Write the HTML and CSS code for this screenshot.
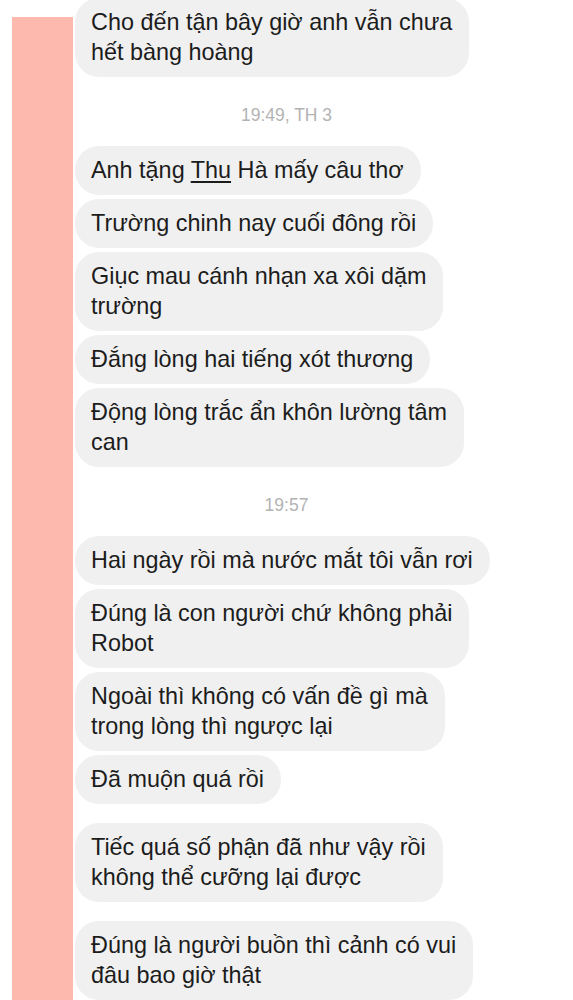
FILE: index.html
```html
<!DOCTYPE html>
<html lang="vi">
<head>
    <meta charset="UTF-8">
    <meta name="viewport" content="width=device-width, initial-scale=1.0">
    <title>Tin nhắn</title>
    <link rel="stylesheet" href="styles.css">
</head>
<body>
    <div class="screen">
        <div class="side-bar"></div>

        <div class="chat">
            <div class="bubble">Cho đến tận bây giờ anh vẫn chưa<br>hết bàng hoàng</div>

            <div class="time">19:49, TH 3</div>

            <div class="bubble">Anh tặng <u>Thu</u> Hà mấy câu thơ</div>
            <div class="bubble">Trường chinh nay cuối đông rồi</div>
            <div class="bubble">Giục mau cánh nhạn xa xôi dặm<br>trường</div>
            <div class="bubble">Đắng lòng hai tiếng xót thương</div>
            <div class="bubble">Động lòng trắc ẩn khôn lường tâm<br>can</div>

            <div class="time">19:57</div>

            <div class="bubble">Hai ngày rồi mà nước mắt tôi vẫn rơi</div>
            <div class="bubble">Đúng là con người chứ không phải<br>Robot</div>
            <div class="bubble">Ngoài thì không có vấn đề gì mà<br>trong lòng thì ngược lại</div>
            <div class="bubble">Đã muộn quá rồi</div>
            <div class="bubble new-group">Tiếc quá số phận đã như vậy rồi<br>không thể cưỡng lại được</div>
            <div class="bubble new-group">Đúng là người buồn thì cảnh có vui<br>đâu bao giờ thật</div>
        </div>
    </div>
</body>
</html>
```

FILE: styles.css
```css
body {
    font-family: 'Liberation Sans', Arial, sans-serif;
    margin: 0;
    padding: 0;
    background-color: #fff;
    height: 100vh;
    overflow: hidden;
}

.screen {
    display: flex;
    height: 100%;
}

.side-bar {
    flex: 0 0 61px;
    margin: 17px 2px 0 12px;
    background-color: #fdb9ad;
}

.chat {
    flex: 1;
    display: flex;
    flex-direction: column;
    align-items: flex-start;
    gap: 4px;
    margin-top: -2px;
    padding-right: 75px;
}

.bubble {
    box-sizing: border-box;
    white-space: nowrap;
    padding: 9px 17px 10px 16px;
    font-size: 23.4px;
    line-height: 30px;
    color: #1c1c1c;
    background-color: #f0f0f0;
    border-radius: 24px;
}

.bubble u {
    text-underline-offset: 3px;
}

.bubble.new-group {
    margin-top: 15px;
}

.time {
    align-self: stretch;
    text-align: center;
    font-size: 17.5px;
    line-height: 20px;
    color: #b3b3b3;
    padding: 24px 0 17px;
}
```
